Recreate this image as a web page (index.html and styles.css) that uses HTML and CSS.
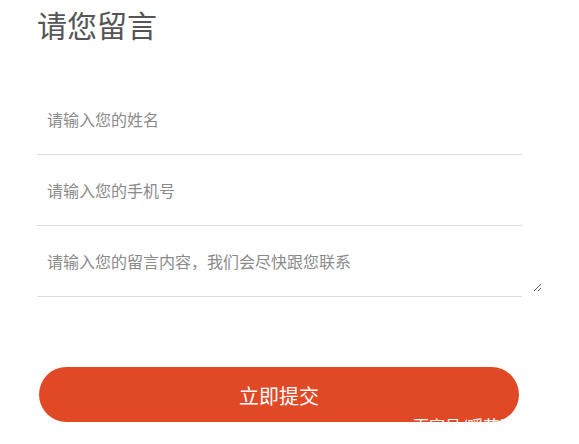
FILE: index.html
```html
<!DOCTYPE html>
<html lang="zh-CN">
<head>
<meta charset="utf-8">
<title>请您留言</title>
<link rel="stylesheet" href="styles.css">
</head>
<body>
<div class="page">
  <h2 class="title">请您留言</h2>
  <form class="form">
    <div class="field"><input class="input" type="text" placeholder="请输入您的姓名"></div>
    <div class="field"><input class="input" type="text" placeholder="请输入您的手机号"></div>
    <div class="field field-area"><textarea class="area" placeholder="请输入您的留言内容，我们会尽快跟您联系"></textarea></div>
    <div class="actions">
      <button class="submit" type="button">立即提交</button>
      <span class="watermark">百家号/暖节谈</span>
    </div>
  </form>
</div>
</body>
</html>
```
FILE: styles.css
```css
html, body {
  margin: 0;
  padding: 0;
  background: #fff;
  font-family: "Microsoft YaHei", "Noto Sans CJK SC", "Noto Sans", sans-serif;
}
.page {
  padding: 0 0 0 37px;
  overflow: hidden;
  height: 444px;
  box-sizing: border-box;
}
.title {
  margin: 0;
  padding-top: 5px;
  font-size: 30px;
  line-height: 38px;
  font-weight: normal;
  color: #555;
}
.form {
  margin-top: 41px;
  width: 485px;
}
.field {
  border-bottom: 1px solid #dcdcdc;
}
.input {
  display: block;
  width: 100%;
  height: 70px;
  box-sizing: border-box;
  border: none;
  outline: none;
  padding: 0 0 0 10px;
  font-family: inherit;
  font-size: 16px;
  color: #333;
  background: transparent;
}
.input::placeholder, .area::placeholder {
  color: #8a8a8a;
}
.field-area {
  padding-bottom: 4px;
}
.area {
  display: block;
  width: 505px;
  height: 66px;
  box-sizing: border-box;
  border: none;
  outline: none;
  padding: 23px 0 0 10px;
  font-family: inherit;
  font-size: 16px;
  line-height: 24px;
  color: #333;
  background: transparent;
  resize: vertical;
}
.actions {
  position: relative;
  margin-top: 70px;
  padding-left: 2px;
}
.submit {
  display: block;
  width: 480px;
  height: 55px;
  border: none;
  border-radius: 28px;
  background: #e14826;
  color: #fff;
  font-family: inherit;
  font-size: 20px;
  padding-top: 3px;
  cursor: pointer;
}
.watermark {
  position: absolute;
  left: 376px;
  top: 47px;
  font-size: 16px;
  line-height: 22px;
  color: #fff;
  white-space: nowrap;
}
```
